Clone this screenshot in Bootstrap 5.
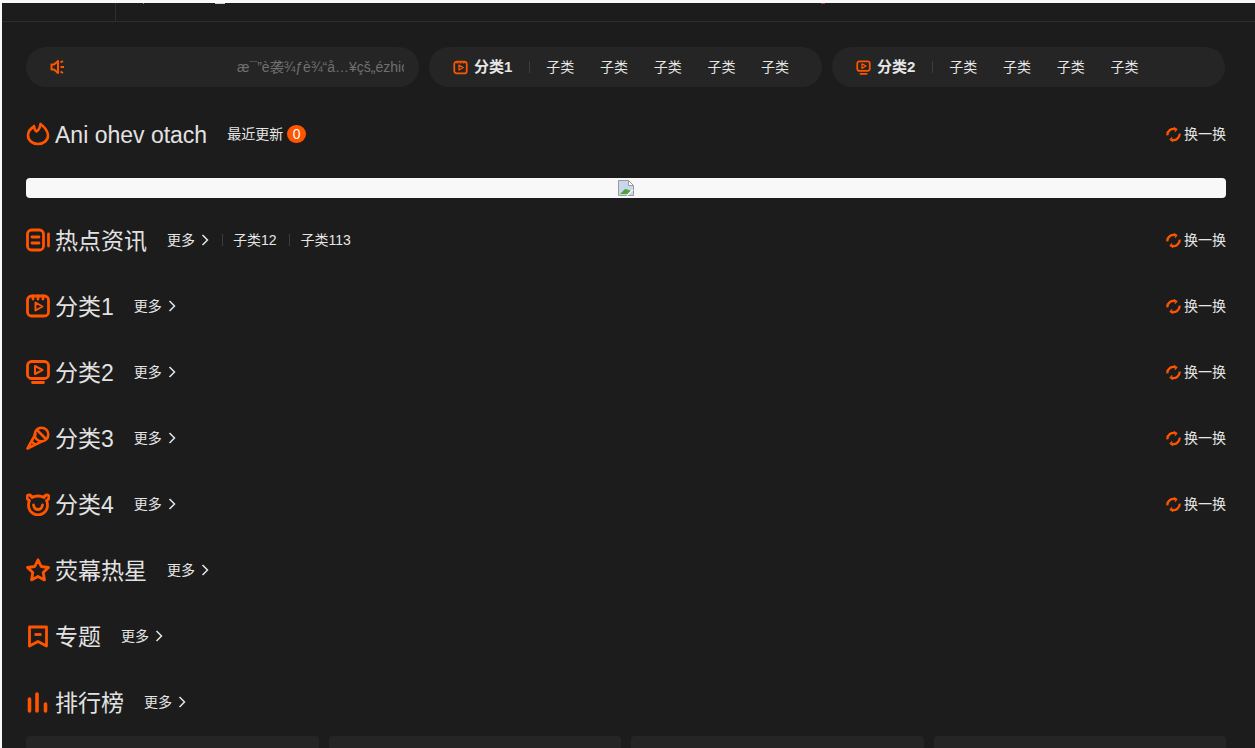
<!DOCTYPE html>
<html lang="zh-CN">

<head>
  <meta charset="UTF-8">
  <meta name="viewport" content="width=device-width, initial-scale=1">
  <title>Ani ohev otach</title>
  <link href="https://cdn.jsdelivr.net/npm/bootstrap@5.3.0/dist/css/bootstrap.min.css" rel="stylesheet">
  <style>
    html, body {
      height: 100%;
      overflow: hidden;
    }

    body {
      background-color: #f8f8f8;
      font-family: "Liberation Sans", "Noto Sans CJK SC", sans-serif;
      font-size: 14px;
      color: #e6e6e6;
      padding: 3px 0 0 2px;
    }

    a {
      color: inherit;
      text-decoration: none;
    }

    svg {
      display: block;
      flex: none;
    }

    .page-wrap {
      background-color: #1c1c1c;
      height: 745px;
      overflow: hidden;
    }

    .top-strip {
      height: 19px;
      border-bottom: 1px solid #2d2d2d;
    }

    .top-cell {
      width: 114px;
      border-right: 1px solid #2d2d2d;
    }

    .top-tick {
      height: 1px;
      background-color: #8a8a8a;
    }

    .tick-a {
      width: 1px;
      margin-left: 27px;
    }

    .tick-b {
      width: 10px;
      margin-left: 71px;
      background-color: #d0d0d0;
    }

    .tick-c {
      width: 4px;
      margin-left: 596px;
      background-color: #a33;
    }

    .page-body {
      padding: 25px 29px 0 24px;
    }

    .pill-row {
      gap: 10px;
      margin-bottom: 14px;
    }

    .pill {
      width: 393px;
      height: 40px;
      background-color: #252525;
      border-radius: 20px;
      padding: 0 24px;
    }

    .notice-text {
      width: 167px;
      margin-left: auto;
      margin-right: -9px;
      overflow: hidden;
      white-space: nowrap;
      color: #707070;
    }

    .pill-head {
      font-size: 15px;
      font-weight: 700;
      margin-left: 6px;
    }

    .pill-rule {
      width: 1px;
      height: 12px;
      background-color: #3d3d3d;
      margin: 0 16px 0 17px;
    }

    .pill-links {
      gap: 25.7px;
    }

    .sec-row {
      height: 66px;
    }

    .sec-title {
      font-size: 23px;
      font-weight: 400;
      margin: 4px 20px 0 5px;
      color: #e2e2e2;
    }

    .sec-more svg {
      margin-left: 6px;
    }

    .sec-rule {
      width: 1px;
      height: 12px;
      background-color: #3d3d3d;
      margin: 0 10.5px 0 12.5px;
    }

    .count-dot {
      width: 19px;
      height: 18px;
      border-radius: 9px;
      background-color: #ff5500;
      color: #fff;
      margin-left: 4px;
    }

    .swap-link svg {
      margin-right: 3px;
    }

    .img-banner {
      height: 20px;
      background-color: #f8f8f8;
      border-radius: 4px;
      margin: 11px 0 9px;
      padding-top: 2px;
    }

    .card-row {
      gap: 10px;
      margin-top: 1px;
    }

    .stub-card {
      flex: 1 1 0;
      height: 60px;
      background-color: #252525;
      border-radius: 4px;
    }
  </style>
</head>

<body>
  <div class="page-wrap">
    <!-- header, scrolled out of view -->
    <div class="top-strip d-flex">
      <div class="top-cell"></div>
      <span class="top-tick tick-a"></span>
      <span class="top-tick tick-b"></span>
      <span class="top-tick tick-c"></span>
    </div>

    <div class="page-body">
      <!-- notice + category pills -->
      <div class="pill-row d-flex">
        <div class="pill d-flex align-items-center">
          <svg width="16" height="16" viewBox="0 0 16 16" fill="none" stroke="#ff5500" stroke-width="2">
            <path d="M1.500 5.500h2.500l4-3.500v12l-4-3.500h-2.500z" stroke-linejoin="round"/>
            <path d="M10.500 3.500l2.500-1.500M10.500 8h3.500M10.500 12.500l2.500 1.500"/>
          </svg>
          <div class="notice-text">æ¯”è袭¾ƒè¾“å…¥çš„ézhicc</div>
        </div>
        <div class="pill d-flex align-items-center">
          <svg width="15" height="15" viewBox="0 0 24 24" fill="none" stroke="#ff5500" stroke-width="2.800" stroke-linejoin="round">
            <rect x="2" y="2.500" width="20" height="19" rx="4"/>
            <path d="M9.500 8l7 4-7 4z" stroke-width="2"/>
            <path d="M7 2.500v3M12 2.500v3M17 2.500v3"/>
          </svg>
          <span class="pill-head">分类1</span>
          <span class="pill-rule"></span>
          <div class="pill-links d-flex">
            <a href="#">子类</a><a href="#">子类</a><a href="#">子类</a><a href="#">子类</a><a href="#">子类</a>
          </div>
        </div>
        <div class="pill d-flex align-items-center">
          <svg width="15" height="15" viewBox="0 0 24 24" fill="none" stroke="#ff5500" stroke-width="2.800" stroke-linejoin="round">
            <rect x="2" y="2" width="20" height="15.500" rx="3.500"/>
            <path d="M9.500 6l6.500 3.700-6.500 3.700z" stroke-width="2"/>
            <path d="M7 22h10" stroke-linecap="round"/>
          </svg>
          <span class="pill-head">分类2</span>
          <span class="pill-rule"></span>
          <div class="pill-links d-flex">
            <a href="#">子类</a><a href="#">子类</a><a href="#">子类</a><a href="#">子类</a>
          </div>
        </div>
      </div>

      <!-- latest -->
      <div class="sec-row d-flex align-items-center">
        <svg width="24" height="24" viewBox="0 0 24 24" fill="none" stroke="#ff5500" stroke-width="2.600" stroke-linejoin="round">
          <path d="M8 4.500c-3.500 2-6 5-6 9 0 5 4.500 8.500 10 8.500s10-3.500 10-8.500c0-4.500-3-8-7.500-11.500-.5 3.500-1.500 6-4 7.500-1.500-1-2.300-3-2.500-5.500z"/>
        </svg>
        <h2 class="sec-title mb-0">Ani ohev otach</h2>
        <a href="#">最近更新</a>
        <span class="count-dot d-flex align-items-center justify-content-center">0</span>
        <a href="#" class="swap-link d-flex align-items-center ms-auto">
          <svg width="15" height="15" viewBox="0 0 16 16" fill="none" stroke="#ff5500" stroke-width="2.400">
            <path d="M1.500 9a6.500 6.500 0 0 1 9-6.500M14.500 7a6.500 6.500 0 0 1-9 6.500"/>
            <path d="M8.500 .5l3 2-2 2.500M7.500 15.500l-3-2 2-2.500" stroke-width="1.300"/>
          </svg>换一换</a>
      </div>

      <!-- image failed to load -->
      <div class="img-banner d-flex justify-content-center">
        <svg width="16" height="16" viewBox="0 0 16 16">
          <path d="M.5.5h10l5 5v10H.5z" fill="#c9d7ee" stroke="#9a9a9a"/>
          <path d="M10.500.5v5h5z" fill="#fff" stroke="#9a9a9a"/>
          <path d="M2 14l5-5c2 0 4 1 6 2l-3 3z" fill="#4fa53a"/>
          <path d="M9 15.500l6-6" stroke="#f8f8f8" stroke-width="1.500"/>
        </svg>
      </div>

      <div class="sec-row d-flex align-items-center">
        <svg width="24" height="24" viewBox="0 0 24 24" fill="none" stroke="#ff5500" stroke-width="2.800" stroke-linecap="round">
          <rect x="1.500" y="2" width="16" height="20" rx="4"/>
          <path d="M6 9h7M6 15h7M22.500 6v12"/>
        </svg>
        <h2 class="sec-title mb-0">热点资讯</h2>
        <a href="#" class="sec-more d-flex align-items-center">更多
          <svg width="8" height="12" viewBox="0 0 8 12" fill="none" stroke="#e6e6e6" stroke-width="1.500"><path d="M1.500 1l5 5-5 5"/></svg>
        </a>
        <span class="sec-rule"></span>
        <a href="#">子类12</a>
        <span class="sec-rule"></span>
        <a href="#">子类113</a>
        <a href="#" class="swap-link d-flex align-items-center ms-auto">
          <svg width="15" height="15" viewBox="0 0 16 16" fill="none" stroke="#ff5500" stroke-width="2.400">
            <path d="M1.500 9a6.500 6.500 0 0 1 9-6.500M14.500 7a6.500 6.500 0 0 1-9 6.500"/>
            <path d="M8.500 .5l3 2-2 2.500M7.500 15.500l-3-2 2-2.500" stroke-width="1.300"/>
          </svg>换一换</a>
      </div>

      <div class="sec-row d-flex align-items-center">
        <svg width="24" height="24" viewBox="0 0 24 24" fill="none" stroke="#ff5500" stroke-width="2.800" stroke-linejoin="round" stroke-linecap="round">
          <rect x="1.500" y="2" width="21" height="20" rx="4"/>
          <path d="M7 2v3M12 2v3M17 2v3"/>
          <path d="M9.500 8.500l7 4-7 4z" stroke-width="2"/>
        </svg>
        <h2 class="sec-title mb-0">分类1</h2>
        <a href="#" class="sec-more d-flex align-items-center">更多
          <svg width="8" height="12" viewBox="0 0 8 12" fill="none" stroke="#e6e6e6" stroke-width="1.500"><path d="M1.500 1l5 5-5 5"/></svg>
        </a>
        <a href="#" class="swap-link d-flex align-items-center ms-auto">
          <svg width="15" height="15" viewBox="0 0 16 16" fill="none" stroke="#ff5500" stroke-width="2.400">
            <path d="M1.500 9a6.500 6.500 0 0 1 9-6.500M14.500 7a6.500 6.500 0 0 1-9 6.500"/>
            <path d="M8.500 .5l3 2-2 2.500M7.500 15.500l-3-2 2-2.500" stroke-width="1.300"/>
          </svg>换一换</a>
      </div>

      <div class="sec-row d-flex align-items-center">
        <svg width="24" height="24" viewBox="0 0 24 24" fill="none" stroke="#ff5500" stroke-width="2.800" stroke-linejoin="round" stroke-linecap="round">
          <rect x="1.500" y="1.500" width="21" height="17" rx="4"/>
          <path d="M9 6l7.500 4-7.500 4z" stroke-width="2"/>
          <path d="M6.500 22.500h11"/>
        </svg>
        <h2 class="sec-title mb-0">分类2</h2>
        <a href="#" class="sec-more d-flex align-items-center">更多
          <svg width="8" height="12" viewBox="0 0 8 12" fill="none" stroke="#e6e6e6" stroke-width="1.500"><path d="M1.500 1l5 5-5 5"/></svg>
        </a>
        <a href="#" class="swap-link d-flex align-items-center ms-auto">
          <svg width="15" height="15" viewBox="0 0 16 16" fill="none" stroke="#ff5500" stroke-width="2.400">
            <path d="M1.500 9a6.500 6.500 0 0 1 9-6.500M14.500 7a6.500 6.500 0 0 1-9 6.500"/>
            <path d="M8.500 .5l3 2-2 2.500M7.500 15.500l-3-2 2-2.500" stroke-width="1.300"/>
          </svg>换一换</a>
      </div>

      <div class="sec-row d-flex align-items-center">
        <svg width="24" height="24" viewBox="0 0 24 24" fill="none" stroke="#ff5500" stroke-width="2.600" stroke-linejoin="round" stroke-linecap="round">
          <circle cx="15.500" cy="8.500" r="6.800"/>
          <path d="M9.500 8L1.500 22.500 16 15.300M5.500 15.500l3.500 3M11.500 4.500l8 8"/>
        </svg>
        <h2 class="sec-title mb-0">分类3</h2>
        <a href="#" class="sec-more d-flex align-items-center">更多
          <svg width="8" height="12" viewBox="0 0 8 12" fill="none" stroke="#e6e6e6" stroke-width="1.500"><path d="M1.500 1l5 5-5 5"/></svg>
        </a>
        <a href="#" class="swap-link d-flex align-items-center ms-auto">
          <svg width="15" height="15" viewBox="0 0 16 16" fill="none" stroke="#ff5500" stroke-width="2.400">
            <path d="M1.500 9a6.500 6.500 0 0 1 9-6.500M14.500 7a6.500 6.500 0 0 1-9 6.500"/>
            <path d="M8.500 .5l3 2-2 2.500M7.500 15.500l-3-2 2-2.500" stroke-width="1.300"/>
          </svg>换一换</a>
      </div>

      <div class="sec-row d-flex align-items-center">
        <svg width="24" height="24" viewBox="0 0 24 24" fill="none" stroke="#ff5500" stroke-width="2.800" stroke-linejoin="round" stroke-linecap="round">
          <path d="M6 5.500C5 2.500 1 2 1 5c0 2 1 3 2.500 3.500C3 9.500 2.500 11 2.500 13c0 5.500 4 10 9.500 10s9.500-4.500 9.500-10c0-2-.5-3.500-1-4.500C22 8 23 7 23 5c0-3-4-2.500-5 .5-1.800-1-3.800-1.500-6-1.500s-4.200.5-6 1.500z"/>
          <path d="M7.500 13c.5 3 2 4.500 4.500 4.500s4-1.500 4.500-4.500"/>
        </svg>
        <h2 class="sec-title mb-0">分类4</h2>
        <a href="#" class="sec-more d-flex align-items-center">更多
          <svg width="8" height="12" viewBox="0 0 8 12" fill="none" stroke="#e6e6e6" stroke-width="1.500"><path d="M1.500 1l5 5-5 5"/></svg>
        </a>
        <a href="#" class="swap-link d-flex align-items-center ms-auto">
          <svg width="15" height="15" viewBox="0 0 16 16" fill="none" stroke="#ff5500" stroke-width="2.400">
            <path d="M1.500 9a6.500 6.500 0 0 1 9-6.500M14.500 7a6.500 6.500 0 0 1-9 6.500"/>
            <path d="M8.500 .5l3 2-2 2.500M7.500 15.500l-3-2 2-2.500" stroke-width="1.300"/>
          </svg>换一换</a>
      </div>

      <div class="sec-row d-flex align-items-center">
        <svg width="24" height="24" viewBox="0 0 24 24" fill="none" stroke="#ff5500" stroke-width="2.800" stroke-linejoin="round">
          <path d="M12 1.800l3.200 6.700 7.300 1-5.300 5.100 1.300 7.300-6.500-3.500-6.500 3.500 1.300-7.300-5.300-5.100 7.300-1z"/>
        </svg>
        <h2 class="sec-title mb-0">荧幕热星</h2>
        <a href="#" class="sec-more d-flex align-items-center">更多
          <svg width="8" height="12" viewBox="0 0 8 12" fill="none" stroke="#e6e6e6" stroke-width="1.500"><path d="M1.500 1l5 5-5 5"/></svg>
        </a>
      </div>

      <div class="sec-row d-flex align-items-center">
        <svg width="24" height="24" viewBox="0 0 24 24" fill="none" stroke="#ff5500" stroke-width="2.800" stroke-linejoin="round">
          <path d="M3.500 3h17v19l-8.500-4.500L3.500 22z"/>
          <path d="M8.500 10.500h7"/>
        </svg>
        <h2 class="sec-title mb-0">专题</h2>
        <a href="#" class="sec-more d-flex align-items-center">更多
          <svg width="8" height="12" viewBox="0 0 8 12" fill="none" stroke="#e6e6e6" stroke-width="1.500"><path d="M1.500 1l5 5-5 5"/></svg>
        </a>
      </div>

      <div class="sec-row d-flex align-items-center">
        <svg width="24" height="24" viewBox="0 0 24 24" fill="none" stroke="#ff5500" stroke-width="3.600" stroke-linecap="round">
          <path d="M3.500 9v12M11 4v17M19.500 14v7"/>
        </svg>
        <h2 class="sec-title mb-0">排行榜</h2>
        <a href="#" class="sec-more d-flex align-items-center">更多
          <svg width="8" height="12" viewBox="0 0 8 12" fill="none" stroke="#e6e6e6" stroke-width="1.500"><path d="M1.500 1l5 5-5 5"/></svg>
        </a>
      </div>

      <div class="card-row d-flex">
        <div class="stub-card"></div>
        <div class="stub-card"></div>
        <div class="stub-card"></div>
        <div class="stub-card"></div>
      </div>
    </div>
  </div>

  <script src="https://cdn.jsdelivr.net/npm/bootstrap@5.3.0/dist/js/bootstrap.bundle.min.js"></script>
</body>

</html>
